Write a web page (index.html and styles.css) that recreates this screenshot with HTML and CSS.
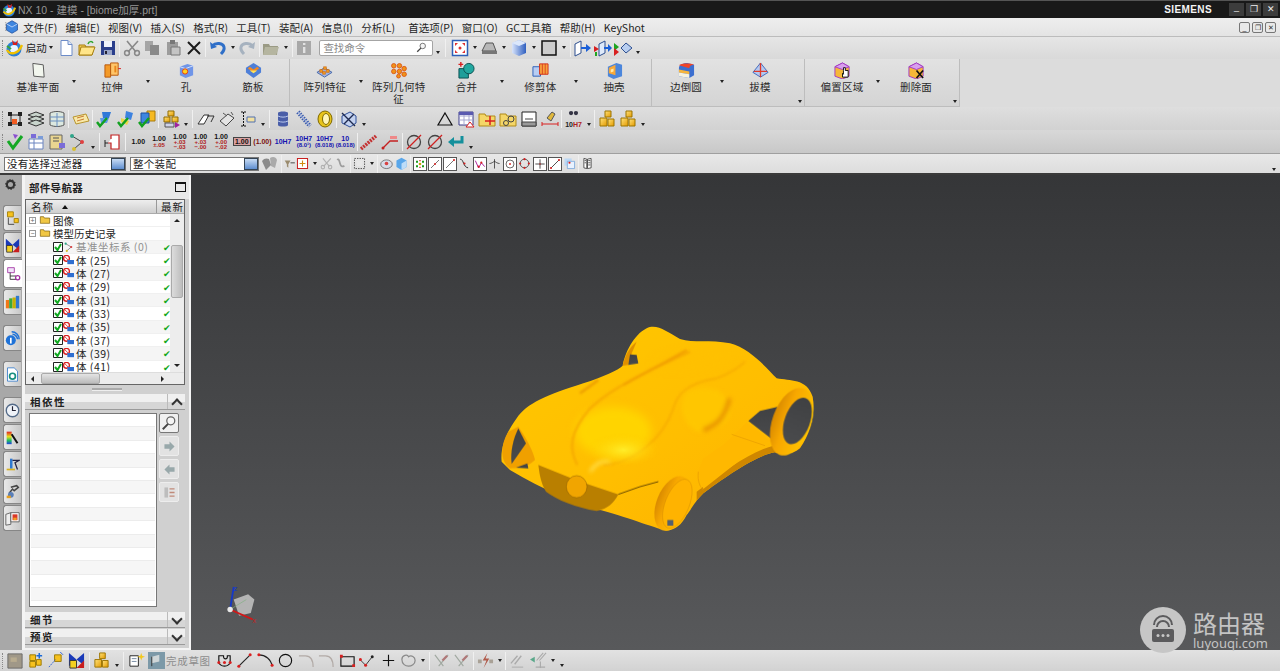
FILE: index.html
```html
<!DOCTYPE html>
<html lang="zh">
<head>
<meta charset="utf-8">
<title>NX 10 - 建模</title>
<link rel="stylesheet" href="styles.css">
</head>
<body>
<svg class="defs" aria-hidden="true">
<defs>
<linearGradient id="gy" x1="0" y1="0" x2="1" y2="1"><stop offset="0" stop-color="#ffe27a"/><stop offset="1" stop-color="#e39a00"/></linearGradient>
<linearGradient id="gb" x1="0" y1="0" x2="1" y2="0"><stop offset="0" stop-color="#d8e4fb"/><stop offset="1" stop-color="#2f5fc0"/></linearGradient>
<symbol id="globe" viewBox="0 0 18 18"><circle cx="9" cy="10" r="7.5" fill="#2b7fd8"/><circle cx="9" cy="10" r="4" fill="#e8f2ff"/><path d="M2 11C5 16 13 16 17 6" fill="none" stroke="#f0c000" stroke-width="2.4"/><path d="M7 1l3 3 3-3-1 5H8z" fill="#d81c1c"/><path d="M2 7l4 3" stroke="#3aa53a" stroke-width="2"/></symbol>
<symbol id="doc" viewBox="0 0 18 18"><path d="M4 1.500h7l4 4v11H4z" fill="#fff" stroke="#6d8cc8"/><path d="M11 1.500v4h4" fill="#d9e5f8" stroke="#6d8cc8"/></symbol>
<symbol id="open" viewBox="0 0 18 18"><path d="M1 6h6l1 2h8l-2 8H1z" fill="#f2cd58" stroke="#a77f10"/><path d="M3 8h14l-3 8H1z" fill="#ffe58a" stroke="#a77f10"/><path d="M10 5c1-3 4-3 5-1" fill="none" stroke="#2fa52f" stroke-width="1.500"/></symbol>
<symbol id="save" viewBox="0 0 18 18"><path d="M2 2h14v14H2z" fill="#2b3f8c"/><path d="M5 2h8v6H5z" fill="#eef2fb"/><path d="M5 11h8v5H5z" fill="#9aa6c8"/><path d="M6 12h2v3H6z" fill="#223"/></symbol>
<symbol id="cut" viewBox="0 0 18 18"><path d="M5 13L15 2M13 13L4 2" stroke="#888" stroke-width="1.600"/><circle cx="4" cy="14" r="2.400" fill="none" stroke="#888" stroke-width="1.500"/><circle cx="14" cy="14" r="2.400" fill="none" stroke="#888" stroke-width="1.500"/></symbol>
<symbol id="copy" viewBox="0 0 18 18"><path d="M2 2h8v10H2z" fill="#a5a5a5"/><path d="M7 6h9v10H7z" fill="#8a8a8a"/></symbol>
<symbol id="paste" viewBox="0 0 18 18"><path d="M3 3h11v13H3z" fill="#9c9c9c"/><path d="M6 1h5v4H6z" fill="#777"/><path d="M7 8h9v8H7z" fill="#c4c4c4" stroke="#777"/></symbol>
<symbol id="x" viewBox="0 0 18 18"><path d="M3 3l12 12M15 3L3 15" stroke="#1b1b1b" stroke-width="2"/></symbol>
<symbol id="undo" viewBox="0 0 18 18"><path d="M3 7c4-4 11-3 12 1 .6 2.500-1 5-3 7" fill="none" stroke="#2f6fc8" stroke-width="3"/><path d="M1 3l1 7 6-2z" fill="#2f6fc8"/></symbol>
<symbol id="redo" viewBox="0 0 18 18"><path d="M15 7C11 3 4 4 3 8c-.6 2.500 1 5 3 7" fill="none" stroke="#a6b2bf" stroke-width="3"/><path d="M17 3l-1 7-6-2z" fill="#a6b2bf"/></symbol>
<symbol id="folderg" viewBox="0 0 18 18"><path d="M1 5h6l1 2h8l-1 9H1z" fill="#9a9a84"/><path d="M3 8h14l-3 8H1z" fill="#b5b5a0"/></symbol>
<symbol id="info" viewBox="0 0 18 18"><path d="M2 2h14v14H2z" fill="#a8a8a8"/><path d="M8 4h2.400v2H8zM8 8h2.400v6H8z" fill="#e2e2e2"/></symbol>
<symbol id="mag" viewBox="0 0 18 18"><circle cx="11" cy="6.500" r="4.500" fill="#f5f5f5" stroke="#666" stroke-width="1.400"/><path d="M8 10l-6 6" stroke="#444" stroke-width="2.200"/></symbol>
<symbol id="view" viewBox="0 0 18 18"><path d="M1.500 1.500h15v15h-15z" fill="#fff" stroke="#2d5fb8" stroke-width="1.500"/><path d="M4 4h3L4 7zM14 4v3l-3-3zM4 14v-3l3 3zM14 14h-3l3-3z" fill="#e03030"/><circle cx="9" cy="9" r="1.500" fill="#e03030"/></symbol>
<symbol id="printer" viewBox="0 0 18 18"><path d="M1 12l4-8h7l3 8z" fill="#b8b8b8" stroke="#555"/><path d="M1 12h15v3H1z" fill="#777"/></symbol>
<symbol id="bcube" viewBox="0 0 18 18"><path d="M2 4l7-3 7 3v10l-7 3-7-3z" fill="url(#gb)"/><path d="M2 4l7-3 7 3-7 3z" fill="#dbe7fb"/></symbol>
<symbol id="arrow3" viewBox="0 0 18 18"><path d="M2 5l6-3v12l-6 3z" fill="#fff" stroke="#2d4f90"/><path d="M8 9h6" stroke="#1a5fd8" stroke-width="2"/><path d="M13 5l5 4-5 4z" fill="#1a5fd8"/></symbol>
<symbol id="arrow4" viewBox="0 0 18 18"><path d="M5 5l6-3v12l-6 3z" fill="#dfeafa" stroke="#2d4f90"/><path d="M0 7l5 3-5 3z" fill="#d82020"/><path d="M2 13v4" stroke="#1fa51f" stroke-width="2"/><path d="M10 9h5" stroke="#1a5fd8" stroke-width="2"/><path d="M14 5l4 4-4 4z" fill="#1a5fd8"/></symbol>
<symbol id="arrow5" viewBox="0 0 18 18"><path d="M0 4l5 4-5 4z" fill="#1fa51f"/><path d="M0 9l5 4-5 4z" fill="#d82020"/><path d="M7 9l5-5 6 5-6 5z" fill="#b8cef0" stroke="#2d4f90"/></symbol>
<symbol id="plane" viewBox="0 0 18 18"><path d="M3 1.500l11 1.500 1 13-11-1z" fill="#f2f6ee" stroke="#555"/></symbol>
<symbol id="extrude" viewBox="0 0 18 18"><path d="M1 3h6v13H1z" fill="#f39a28" stroke="#b8560a"/><path d="M7 1h8v13H7z" fill="#ffc66a" stroke="#b8560a"/><path d="M11 4h2v7h-2z" fill="#e8851a"/><path d="M15 7h3" stroke="#d82020"/></symbol>
<symbol id="hole" viewBox="0 0 18 18"><path d="M2 5l8-3 6 2v10l-8 3-6-3z" fill="#6f95e8"/><path d="M2 5l6 2 8-3" fill="none" stroke="#d9e4fb"/><circle cx="7.500" cy="10" r="2.800" fill="#ffd21f" stroke="#e63a10"/></symbol>
<symbol id="rib" viewBox="0 0 18 18"><path d="M9 1l8 5v5l-8 6-8-6V6z" fill="#4e7fd8"/><path d="M3 7l6 4 6-4-2-2-4 3-4-3z" fill="#f68a1f"/><path d="M5 9l4 3 4-3" fill="#ffe35a"/></symbol>
<symbol id="pat" viewBox="0 0 18 18"><path d="M1 11l8-5 8 5-8 5z" fill="#9fb6e6" stroke="#4566a8"/><g fill="#f39a20" stroke="#c25a00" stroke-width=".5"><path d="M4 8h3v3H4zM8 5h3v3H8zM11 8h3v3h-3zM7 10h3v3H7z"/></g></symbol>
<symbol id="patg" viewBox="0 0 18 18"><g fill="#f09318" stroke="#d8480c" stroke-width=".8"><circle cx="4" cy="4" r="2.400"/><circle cx="10" cy="4" r="2.400"/><circle cx="4" cy="10" r="2.400"/><circle cx="10" cy="10" r="2.400"/><circle cx="15" cy="7" r="2.400"/><circle cx="15" cy="13" r="2.400"/><circle cx="9" cy="15" r="2"/></g></symbol>
<symbol id="unite" viewBox="0 0 18 18"><path d="M1 7h10v10H1z" fill="#1e9e9a" stroke="#0a4f50"/><circle cx="11.500" cy="7" r="5.500" fill="#22a8a0" stroke="#0a4f50"/><path d="M3 0v5M.5 2.500h5" stroke="#d82020" stroke-width="1.500"/></symbol>
<symbol id="trim" viewBox="0 0 18 18"><path d="M1 5h8v10H1z" fill="#b8cdf3" stroke="#2d5fb8"/><path d="M8 2h9v11H8z" fill="#f7a03c" stroke="#d4301a"/><path d="M11 2v11M14 2v11" stroke="#d4301a" stroke-width=".8"/></symbol>
<symbol id="shell" viewBox="0 0 18 18"><path d="M2 5l9-4 6 2v12l-9 3-6-3z" fill="#4b86dc"/><path d="M3 6l7-3v11l-7-2z" fill="#f8a838"/><path d="M5 8l3-1v3l-3 1z" fill="#ffeaa8"/></symbol>
<symbol id="blend" viewBox="0 0 18 18"><path d="M1 6c0-3 5-5 9-5l7 2v11l-5 3-11-2z" fill="#3c6fd0"/><path d="M1 8l11 2v3L1 11z" fill="#f7b53c"/><path d="M1 3.500l11 3c0-2 2-3.500 5-3.500-3-2-14-2-16 .5z" fill="#f04428"/><path d="M1 11l11 2v4L1 15z" fill="#f6f2e0"/></symbol>
<symbol id="draft" viewBox="0 0 18 18"><path d="M9 1l8 10-8 5-8-5z" fill="#b4c8f0" stroke="#3d67bd"/><path d="M9 1v15M2 10h14" stroke="#e03a2a" stroke-width="1.400"/></symbol>
<symbol id="offset" viewBox="0 0 18 18"><path d="M1 5l8-4 7 4v10l-7 3-8-3z" fill="#f6b838" stroke="#a13ac6"/><path d="M1 5l8 3 7-3-7-4z" fill="#d8a0ee" stroke="#a13ac6"/><path d="M10 9V6h2v3h3v7h-6v-4l1 1z" fill="#fff" stroke="#111"/></symbol>
<symbol id="delf" viewBox="0 0 18 18"><path d="M1 5l8-4 7 4v10l-7 3-8-3z" fill="#f6b838" stroke="#a13ac6"/><path d="M1 5l8 3 7-3-7-4z" fill="#d8a0ee" stroke="#a13ac6"/><path d="M9 9l7 8M16 9l-7 8" stroke="#111" stroke-width="1.800"/></symbol>
<symbol id="sk" viewBox="0 0 18 18"><path d="M5 5h9v9H5z" fill="none" stroke="#222"/><path d="M2 2h4v4H2zM12 2h4v4h-4zM2 12h4v4H2zM12 12h4v4h-4z" fill="#222"/><path d="M6 9h5v5H6z" fill="#f05a20"/></symbol>
<symbol id="layer" viewBox="0 0 18 18"><g fill="#c8d4cc" stroke="#333"><path d="M1 5l8-3 8 3-8 3z"/><path d="M1 9l8-3 8 3-8 3z"/><path d="M1 13l8-3 8 3-8 3z"/></g></symbol>
<symbol id="table" viewBox="0 0 18 18"><path d="M2 3c4-2 10-2 14 0v12c-4 2-10 2-14 0z" fill="#dce8e0" stroke="#555"/><path d="M2 7h14M2 11h14M9 3v14" stroke="#6b8fc0"/></symbol>
<symbol id="tag" viewBox="0 0 18 18"><path d="M1 7l13-3 3 7-13 3z" fill="#f8e8a8" stroke="#b8952e"/><path d="M5 8l7-2M5 11l7-2" stroke="#c87a30"/></symbol>
<symbol id="blue1" viewBox="0 0 18 18"><path d="M6 2h9l-2 6H7z" fill="#2f78d8"/><path d="M4 8h9l-2 5H5z" fill="#5c9ae8"/><path d="M1 12l3 4 7-8" fill="none" stroke="#12a020" stroke-width="2.400"/></symbol>
<symbol id="blue2" viewBox="0 0 18 18"><path d="M9 1l7 2-2 7-6-2z" fill="#3c82e0"/><path d="M4 8l8 3-2 4-6-3z" fill="#e8d848"/><path d="M1 12l3 4 7-8" fill="none" stroke="#12a020" stroke-width="2.400"/></symbol>
<symbol id="blue3" viewBox="0 0 18 18"><path d="M9 1h8v10H9z" fill="#f6ba22" stroke="#a87a0a"/><path d="M3 3h8v10H3z" fill="#3e86e0" stroke="#1c4f9f"/><path d="M1 12l3 4 7-8" fill="none" stroke="#12a020" stroke-width="2.400"/></symbol>
<symbol id="menui" viewBox="0 0 18 18"><path d="M9 1l7 4v8l-7 4-7-4V5z" fill="#3e86e0" stroke="#1c4f9f"/><path d="M2 5l7 4 7-4" fill="none" stroke="#cfe0fa"/><path d="M1 3v12" stroke="#666" stroke-dasharray="1 1"/></symbol>
<symbol id="cubes" viewBox="0 0 18 18"><g fill="url(#gy)" stroke="#8f6a00"><path d="M6 1h6v5H6z"/><path d="M2 7h6v5H2z"/><path d="M10 7h6v5h-6z"/></g><path d="M3 13h9v4H3z" fill="#cfd2e8" stroke="#555"/><path d="M13 12l5 3-5 3z" fill="#a020a0"/></symbol>
<symbol id="skew" viewBox="0 0 18 18"><path d="M1 14l6-9h5l-5 9z" fill="#fff" stroke="#333"/><path d="M10 6l7 0-3 6" fill="none" stroke="#333"/></symbol>
<symbol id="eraser" viewBox="0 0 18 18"><path d="M2 11l8-7 6 4-8 8z" fill="#e4e4e4" stroke="#444"/><path d="M5 3l4 3M13 2l2 3" stroke="#555"/></symbol>
<symbol id="dimv" viewBox="0 0 18 18"><path d="M2 2h5M2 16h5M4.500 2v14" stroke="#111" stroke-dasharray="2 1"/><path d="M8 7h8v5H8z" fill="#f2e0a0" stroke="#5070b0"/></symbol>
<symbol id="cyl" viewBox="0 0 18 18"><path d="M4 3c0-2 10-2 10 0v12c0 2-10 2-10 0z" fill="#4a5ea8"/><path d="M4 6c3 1.500 7 1.500 10 0M4 11c3 1.500 7 1.500 10 0" fill="none" stroke="#b9c8ec"/></symbol>
<symbol id="spring" viewBox="0 0 18 18"><path d="M3 2l12 14" stroke="#3c5cae" stroke-width="4.500" stroke-dasharray="1.400 1.200"/><path d="M3 2l12 14" stroke="#9db2e2" stroke-width="1"/></symbol>
<symbol id="coil" viewBox="0 0 18 18"><ellipse cx="9" cy="9" rx="7" ry="8" fill="#e8c41c" stroke="#806a00"/><ellipse cx="10" cy="9" rx="3.500" ry="5.500" fill="#fff6b8" stroke="#806a00"/></symbol>
<symbol id="wire" viewBox="0 0 18 18"><path d="M2 6l8-4 6 4v7l-6 4-8-4z" fill="#c3d2f0" stroke="#2e4f98"/><path d="M2 3l13 13M4 14l10-10" stroke="#1e2a50" stroke-width="1.400"/></symbol>
<symbol id="tri" viewBox="0 0 18 18"><path d="M9 3l7 12H2z" fill="none" stroke="#111" stroke-width="1.200"/></symbol>
<symbol id="grid" viewBox="0 0 18 18"><path d="M2 2h14v13H2z" fill="#fff" stroke="#3a3a8a"/><path d="M2 6h14M2 10h14M7 2v13M12 2v13" stroke="#a8a8d0"/><path d="M2 2h14v3H2z" fill="#5a5ab0"/><path d="M13 12l4 5H9z" fill="#fff" stroke="#d82020"/></symbol>
<symbol id="starf" viewBox="0 0 18 18"><path d="M1 4h6l1 2h9v10H1z" fill="#f4d668" stroke="#b08a18"/><path d="M12 6v9M7 11h10" stroke="#d82020" stroke-width="1.500"/></symbol>
<symbol id="foldc" viewBox="0 0 18 18"><path d="M1 4h6l1 2h9v10H1z" fill="#f4d668" stroke="#b08a18"/><circle cx="12" cy="9" r="3" fill="none" stroke="#444"/><circle cx="7" cy="13" r="2.500" fill="none" stroke="#444"/></symbol>
<symbol id="sheet" viewBox="0 0 18 18"><path d="M2 2h14v14H2z" fill="#fff" stroke="#222"/><path d="M2 12h14v4H2zM5 9h8" fill="#999" stroke="#444"/></symbol>
<symbol id="brush" viewBox="0 0 18 18"><path d="M6 8l5-6 3 2-4 7z" fill="#e0b83c" stroke="#555"/><path d="M1 14h16M1 12v4M17 12v4" stroke="#d82020"/></symbol>
<symbol id="bino" viewBox="0 0 18 18"><circle cx="5" cy="5" r="3.500" fill="#334"/><circle cx="13" cy="5" r="3.500" fill="#334"/></symbol>
<symbol id="gold" viewBox="0 0 18 18"><g fill="url(#gy)" stroke="#9c7400"><path d="M7 1h6v6H7z"/><path d="M2 8h7v8H2z"/><path d="M10 9h6v7h-6z"/></g></symbol>
<symbol id="check" viewBox="0 0 18 18"><path d="M2 8l5 7L16 3" fill="none" stroke="#14a824" stroke-width="3"/><path d="M7 1l2 5 3-4" fill="#8a4fd0"/></symbol>
<symbol id="asm" viewBox="0 0 18 18"><path d="M2 6h14v10H2z" fill="#fff" stroke="#6a84c0"/><path d="M2 10h14M7 6v10" stroke="#6a84c0"/><path d="M4 1h5v4H4z" fill="#7a6cd8"/><path d="M11 3h5v3h-5z" fill="#7a9cd8"/></symbol>
<symbol id="asm2" viewBox="0 0 18 18"><path d="M2 2h12v14H2z" fill="#e9d590" stroke="#666"/><path d="M5 5h6M5 8h6" stroke="#555"/><path d="M11 10h6v5h-6z" fill="#7a6cd8"/></symbol>
<symbol id="net" viewBox="0 0 18 18"><path d="M3 3l10 6-8 7" fill="none" stroke="#444"/><circle cx="3" cy="3" r="2" fill="#2fa58a"/><circle cx="13" cy="9" r="2" fill="#e04040"/><circle cx="5" cy="16" r="2" fill="#d8c030"/></symbol>
<symbol id="step" viewBox="0 0 18 18"><path d="M7 6V2h8v14H7V10H4" fill="#fff" stroke="#c42020" stroke-width="1.200"/><path d="M1 7v7M1 10h3" stroke="#222"/></symbol>
<symbol id="ruler" viewBox="0 0 18 18"><path d="M1 16L16 3" stroke="#c43030" stroke-width="3.500" stroke-dasharray="2 1"/></symbol>
<symbol id="dimr" viewBox="0 0 18 18"><path d="M2 15l7-7h8" fill="none" stroke="#c42020" stroke-width="1.300"/><circle cx="2" cy="15" r="1.500" fill="#c42020"/><path d="M9 3h7v3H9z" fill="#e88"/></symbol>
<symbol id="noc" viewBox="0 0 18 18"><circle cx="9" cy="9" r="6.500" fill="none" stroke="#444" stroke-width="1.300"/><path d="M2 16L16 2" stroke="#d02020" stroke-width="1.300"/></symbol>
<symbol id="ret" viewBox="0 0 18 18"><path d="M15 3v6H5" fill="none" stroke="#14909c" stroke-width="3"/><path d="M7 4l-6 5 6 5z" fill="#14909c"/></symbol>
<symbol id="parts" viewBox="0 0 18 18"><path d="M1 6c2-3 5-3 7-2l2 6-5 5z" fill="#8a8a8a"/><path d="M9 3c3-2 6-1 7 2l-2 8-4-2z" fill="#aaa"/></symbol>
<symbol id="funnel" viewBox="0 0 18 18"><path d="M1 5h8L6 10v5L4 13v-3z" fill="#9a8b6e"/><path d="M9 8h6" stroke="#7a7a7a" stroke-width="2"/></symbol>
<symbol id="redsq" viewBox="0 0 18 18"><path d="M2 2h14v14H2z" fill="#fff" stroke="#c82020" stroke-width="1.400"/><path d="M9 5v8M5 9h8" stroke="#d08a10" stroke-width="1.500"/></symbol>
<symbol id="sel" viewBox="0 0 18 18"><path d="M2 2h14v14H2z" fill="none" stroke="#222" stroke-dasharray="2 1.500"/><path d="M5 5h8v8H5z" fill="#e8e8e8"/></symbol>
<symbol id="wave" viewBox="0 0 18 18"><path d="M3 4c2-2 3 1 4 5s3 5 6 3" fill="none" stroke="#666" stroke-width="2.400"/></symbol>
<symbol id="view2" viewBox="0 0 18 18"><ellipse cx="9" cy="10" rx="8" ry="6" fill="#d6dce8" stroke="#555"/><circle cx="9" cy="9" r="2.500" fill="#d84040"/></symbol>
<symbol id="cube3" viewBox="0 0 18 18"><path d="M2 5l7-4 7 4v9l-7 4-7-4z" fill="#58a6ea"/><path d="M9 9l7-4v9l-7 4z" fill="#bcdcf8"/></symbol>
<symbol id="boxpts" viewBox="0 0 18 18"><circle cx="9" cy="9" r="2" fill="#c7a400"/><path d="M3 4h3v3H3zM12 4h3v3h-3zM3 11h3v3H3zM12 11h3v3h-3z" fill="#1a9a1a"/><path d="M8 3h2v2H8zM8 13h2v2H8z" fill="#d82020"/></symbol>
<symbol id="ln" viewBox="0 0 18 18"><path d="M3 15L15 3" stroke="#333"/><circle cx="9" cy="9" r="1.500" fill="#d82020"/></symbol>
<symbol id="ln2" viewBox="0 0 18 18"><path d="M3 15L15 3" stroke="#333"/><circle cx="15" cy="3" r="1.500" fill="#d82020"/></symbol>
<symbol id="curve" viewBox="0 0 18 18"><path d="M3 3c5 0 4 11 11 12" fill="none" stroke="#222" stroke-width="1.300"/><circle cx="9" cy="9" r="1.500" fill="#d82020"/></symbol>
<symbol id="vee" viewBox="0 0 18 18"><path d="M2 4l5 11 4-8 5 6" fill="none" stroke="#b02aa0" stroke-width="1.500"/><circle cx="7" cy="13" r="1.600" fill="#d82020"/><circle cx="11" cy="7" r="1.600" fill="#d82020"/></symbol>
<symbol id="tee" viewBox="0 0 18 18"><path d="M9 3v13M2 9c3 0 5-2 7-3 2 1 4 3 7 3" fill="none" stroke="#222"/></symbol>
<symbol id="circd" viewBox="0 0 18 18"><circle cx="9" cy="9" r="6" fill="none" stroke="#222"/><circle cx="9" cy="9" r="1.400" fill="#d82020"/></symbol>
<symbol id="circp" viewBox="0 0 18 18"><circle cx="9" cy="9" r="6" fill="none" stroke="#222"/><g fill="#d82020"><circle cx="9" cy="3" r="1.500"/><circle cx="15" cy="9" r="1.500"/><circle cx="9" cy="15" r="1.500"/><circle cx="3" cy="9" r="1.500"/></g></symbol>
<symbol id="plus" viewBox="0 0 18 18"><path d="M9 2v14M2 9h14" stroke="#222" stroke-width="1.200"/><circle cx="9" cy="9" r="1" fill="#d82020"/></symbol>
<symbol id="tile" viewBox="0 0 18 18"><path d="M2 2h10v10H2z" fill="#bcd8f4"/><path d="M6 6h10v10H6z" fill="#e8f2ff" stroke="#6a9ed8"/><circle cx="9" cy="8" r="1.500" fill="#d82020"/></symbol>
<symbol id="book" viewBox="0 0 18 18"><path d="M4 2l4 1v13l-4-1zM9 3l5-1v13l-5 1z" fill="#fff" stroke="#222"/><path d="M5 5h2M5 8h2M10 5h3M10 8h3M10 11h3" stroke="#222"/></symbol>
<symbol id="sq" viewBox="0 0 18 18"><path d="M2 2h14v14H2z" fill="#cdcdcd" stroke="#111" stroke-width="1.500"/></symbol>
<symbol id="gear" viewBox="0 0 18 18"><circle cx="9" cy="9" r="5" fill="none" stroke="#333" stroke-width="3"/><circle cx="9" cy="9" r="6.500" fill="none" stroke="#333" stroke-width="1.600" stroke-dasharray="2 2"/></symbol>
<symbol id="t1" viewBox="0 0 18 18"><g fill="#f6c11e" stroke="#9c7a00"><path d="M3 1h7v6H3zM11 9h5v5h-5z"/></g><path d="M4 8v8h7" fill="none" stroke="#333"/></symbol>
<symbol id="t2" viewBox="0 0 18 18"><path d="M1 1l8 7 8-7v13l-8-6-8 7z" fill="#1a3ab8"/><path d="M2 9h7v8H2z" fill="#f4d020" stroke="#333"/><path d="M9 17l8-8v8z" fill="#c81e1e"/></symbol>
<symbol id="t3" viewBox="0 0 18 18"><path d="M2 2h8v6H2z" fill="#f2e4fa" stroke="#a030a0"/><path d="M5 8v8h7M5 12h7" fill="none" stroke="#222"/><circle cx="14" cy="14" r="2.500" fill="none" stroke="#a030a0" stroke-width="1.500"/></symbol>
<symbol id="t4" viewBox="0 0 18 18"><path d="M1 6h4v10H1z" fill="#f07818"/><path d="M5 4h4v12H5z" fill="#3aa83a"/><path d="M9 3h4v13H9z" fill="#c8b000"/><path d="M13 1h4v15h-4z" fill="#2f78d0"/></symbol>
<symbol id="t5" viewBox="0 0 18 18"><circle cx="7" cy="11" r="6" fill="#1e72d8"/><path d="M6 8h2v7H6z" fill="#fff"/><path d="M8 1c5 0 9 4 9 9M9 4c3 0 6 3 6 6" fill="none" stroke="#1e72d8" stroke-width="1.800"/></symbol>
<symbol id="t6" viewBox="0 0 18 18"><path d="M3 1h8l4 4v12H3z" fill="#fff" stroke="#3478c8"/><circle cx="9" cy="11" r="3.500" fill="none" stroke="#1a9080" stroke-width="2"/></symbol>
<symbol id="t7" viewBox="0 0 18 18"><circle cx="9" cy="9" r="7.500" fill="#eef2f8" stroke="#536a88" stroke-width="1.600"/><path d="M9 4v5h4" fill="none" stroke="#223" stroke-width="1.400"/></symbol>
<symbol id="t8" viewBox="0 0 18 18"><defs><linearGradient id="rb" x1="0" y1="0" x2="0" y2="1"><stop offset="0" stop-color="#e02020"/><stop offset=".4" stop-color="#e8e020"/><stop offset=".7" stop-color="#20c060"/><stop offset="1" stop-color="#2040e0"/></linearGradient></defs><path d="M2 2h6v15H2z" fill="url(#rb)"/><path d="M8 5l7 11" stroke="#111" stroke-width="2.400"/></symbol>
<symbol id="t9" viewBox="0 0 18 18"><path d="M6 2h3v12H6z" fill="#2f78d0"/><path d="M2 14h10v2H2z" fill="#d8b020"/><path d="M9 4h8l-5 3 3 8" fill="none" stroke="#224" stroke-width="1.500"/></symbol>
<symbol id="t10" viewBox="0 0 18 18"><path d="M7 4l7-2 2 2-5 4-2-2-4 5" fill="none" stroke="#444" stroke-width="1.800"/><circle cx="7" cy="13" r="3.500" fill="#5a7fb8"/><path d="M2 14h5v3H2z" fill="#e8a020"/></symbol>
<symbol id="t11" viewBox="0 0 18 18"><path d="M1 4l6-2v14l-6 1z" fill="#eee" stroke="#555"/><path d="M7 2h10v11H7z" fill="#fff" stroke="#555"/><path d="M9 4h6v7H9z" fill="#d83828"/><path d="M10 8h4v3h-4z" fill="#f0a020"/></symbol>
<symbol id="fldt" viewBox="0 0 18 18"><path d="M2 4h5l1 2h8v8H2z" fill="#f1c744" stroke="#7a5a00"/></symbol>
<symbol id="flag" viewBox="0 0 18 18"><path d="M0 0h18v18H0z" fill="#7c99a8"/><path d="M4 5l8-2v7l-8 2z" fill="#cfd6d8"/><path d="M4 5v10" stroke="#333"/></symbol>
<symbol id="skstar" viewBox="0 0 18 18"><path d="M2 4h9v11H2z" fill="#fff" stroke="#222"/><path d="M4 7h5M4 10h5" stroke="#7488a0"/><path d="M14 1l1 3 3 1-3 1-1 3-1-3-3-1 3-1z" fill="#f2c81e"/></symbol>
<symbol id="inv" viewBox="0 0 18 18"><path d="M1 1h16v16H1z" fill="#a09888" stroke="#666"/><path d="M4 5h7v5H4z" fill="#b8ac90"/></symbol>
<symbol id="addc" viewBox="0 0 18 18"><g fill="#f6c11e" stroke="#9c7a00"><path d="M3 3h6v6H3zM3 10h6v6H3zM10 8h5v6h-5z"/></g><path d="M13 1v6M10 4h6" stroke="#1a6ad8" stroke-width="1.600"/></symbol>
<symbol id="mvc" viewBox="0 0 18 18"><path d="M8 3h7v7H8z" fill="#f6c11e" stroke="#9c7a00"/><path d="M2 16l7-8" stroke="#2f62d0" stroke-dasharray="2 1"/><path d="M14 0l3 3" stroke="#2f62d0"/></symbol>
<symbol id="sproc" viewBox="0 0 18 18"><path d="M3 4h5v1c0 3 4 3 4 0V4h3v6c0 3-3 5-6 5s-6-2-6-5z" fill="none" stroke="#111" stroke-width="1.200"/><circle cx="3" cy="11" r="1.600" fill="#d82020"/><circle cx="9" cy="11" r="1.600" fill="#d82020"/><circle cx="15" cy="11" r="1.600" fill="#d82020"/></symbol>
<symbol id="line" viewBox="0 0 18 18"><path d="M3 15L15 3" stroke="#222" stroke-width="1.200"/><circle cx="3" cy="15" r="1.600" fill="#d82020"/><circle cx="15" cy="3" r="1.600" fill="#d82020"/></symbol>
<symbol id="arc" viewBox="0 0 18 18"><path d="M2 3c7 0 13 5 14 12" fill="none" stroke="#222" stroke-width="1.200"/><circle cx="2" cy="3" r="1.600" fill="#d82020"/><circle cx="16" cy="14" r="1.600" fill="#d82020"/></symbol>
<symbol id="circ" viewBox="0 0 18 18"><circle cx="9" cy="9" r="6.500" fill="none" stroke="#111" stroke-width="1.200"/></symbol>
<symbol id="fil" viewBox="0 0 18 18"><path d="M1 4h7c5 0 8 3 8 12" fill="none" stroke="#b2aaa6" stroke-width="1.300"/></symbol>
<symbol id="rect" viewBox="0 0 18 18"><path d="M2 5h14v10H2z" fill="none" stroke="#111" stroke-width="1.200"/><path d="M1 3h3v3H1zM14 13h3v3h-3z" fill="#d82020"/></symbol>
<symbol id="poly" viewBox="0 0 18 18"><path d="M1 8l6 6 7-9" fill="none" stroke="#333"/><circle cx="7" cy="14" r="1.600" fill="#d82020"/><circle cx="14" cy="5" r="1.600" fill="#222"/><circle cx="1.500" cy="8" r="1.600" fill="#d82020"/></symbol>
<symbol id="bigplus" viewBox="0 0 18 18"><path d="M9 3v12M3 9h12" stroke="#111" stroke-width="1.200"/></symbol>
<symbol id="blob" viewBox="0 0 18 18"><path d="M2 8c0-5 6-6 7-3 3-2 7 0 7 4s-4 6-7 6-7-2-7-7z" fill="none" stroke="#8a8a8a" stroke-width="1.300"/></symbol>
<symbol id="trimg" viewBox="0 0 18 18"><path d="M2 3l9 12M16 3L6 15" stroke="#a0a8a0" stroke-width="1.200"/><path d="M10 9l5-5" stroke="#b07878" stroke-width="2.500"/></symbol>
<symbol id="bolt" viewBox="0 0 18 18"><path d="M1 8h4v4H1zM13 8h4v4h-4z" fill="#a9a196"/><path d="M11 1L6 9h4l-3 8 6-10H9z" fill="#b05a4a"/></symbol>
<symbol id="para" viewBox="0 0 18 18"><path d="M2 12L9 4M6 13l7-9" stroke="#aaa" stroke-width="1.400"/><path d="M3 16h12" stroke="#aaa"/></symbol>
<symbol id="para2" viewBox="0 0 18 18"><path d="M0 8l5-3v6z" fill="#5aa88a"/><path d="M7 9l7-8M10 9l7-8M11 10v7M6 16h10" stroke="#aaa" stroke-width="1.200"/></symbol>
<symbol id="cmp" viewBox="0 0 18 18"><path d="M2 2h5v14H2z" fill="#bdbdbd"/><path d="M9 4h7M9 9h7M9 14h7" stroke="#c08a7a" stroke-width="2"/></symbol>
<symbol id="arr-r" viewBox="0 0 18 18"><path d="M2 6h7V2l7 7-7 7v-4H2z" fill="#98a8aa"/></symbol>
<symbol id="arr-l" viewBox="0 0 18 18"><path d="M16 6H9V2L2 9l7 7v-4h7z" fill="#98a8aa"/></symbol>
<symbol id="cb" viewBox="0 0 10 10"><path d="M.5.500h9v9h-9z" fill="#fff" stroke="#222"/><path d="M2 5l2.500 3L8 2" fill="none" stroke="#10a820" stroke-width="2"/></symbol>
<symbol id="bodyi" viewBox="0 0 14 12"><circle cx="4" cy="4" r="3.500" fill="#fff" stroke="#d81c1c" stroke-width="1.600"/><path d="M2 2l4 4" stroke="#d81c1c"/><path d="M5 6h8v5H5z" fill="#2f6fd0"/></symbol>
</defs>
</svg>

<div class="app">
  <header class="titlebar">
    <svg class="app-logo"><use href="#globe"/></svg>
    <span class="title-text">NX 10 - 建模 - [biome加厚.prt]</span>
    <span class="siemens">SIEMENS</span>
    <span class="winbtn win-min">_</span><span class="winbtn">❐</span><span class="winbtn">✕</span>
  </header>

  <nav class="menubar">
    <svg class="menu-logo"><use href="#menui"/></svg>
    <span>文件(F)</span><span>编辑(E)</span><span>视图(V)</span><span>插入(S)</span><span>格式(R)</span><span>工具(T)</span><span>装配(A)</span><span>信息(I)</span><span>分析(L)</span><span class="menu-gap">首选项(P)</span><span>窗口(O)</span><span>GC工具箱</span><span>帮助(H)</span><span>KeyShot</span>
    <span class="docbtns"><b>_</b><b>❐</b><b>✕</b></span>
  </nav>

  <div class="tb row1">
    <u class="grip"></u>
    <svg class="i"><use href="#globe"/></svg><span class="startlbl">启动</span><i class="dd"></i>
    <svg class="i"><use href="#doc"/></svg><svg class="i"><use href="#open"/></svg><svg class="i"><use href="#save"/></svg><u class="sep"></u>
    <svg class="i"><use href="#cut"/></svg><svg class="i"><use href="#copy"/></svg><svg class="i"><use href="#paste"/></svg><svg class="i"><use href="#x"/></svg><u class="sep"></u>
    <svg class="i"><use href="#undo"/></svg><i class="dd"></i><svg class="i"><use href="#redo"/></svg><u class="sep"></u>
    <svg class="i"><use href="#folderg"/></svg><i class="dd"></i><u class="sep"></u><svg class="i"><use href="#info"/></svg>
    <div class="searchbox"><span>查找命令</span><svg class="i-s"><use href="#mag"/></svg></div><i class="dd dd-low"></i><u class="sep ww"></u>
    <svg class="i"><use href="#view"/></svg><i class="dd"></i><svg class="i"><use href="#printer"/></svg><i class="dd"></i><svg class="i"><use href="#bcube"/></svg><i class="dd"></i><svg class="i"><use href="#sq"/></svg><i class="dd"></i><u class="sep"></u>
    <svg class="i"><use href="#arrow3"/></svg><svg class="i"><use href="#arrow4"/></svg><svg class="i"><use href="#arrow5"/></svg><i class="dd dd-low"></i>
  </div>

  <div class="ribbon">
    <section class="rgroup g1">
      <div class="ritem"><svg class="ri"><use href="#plane"/></svg><span>基准平面</span><i class="dd dd-r"></i></div>
      <div class="ritem"><svg class="ri"><use href="#extrude"/></svg><span>拉伸</span><i class="dd dd-r"></i></div>
      <div class="ritem"><svg class="ri"><use href="#hole"/></svg><span>孔</span></div>
      <div class="ritem narrow"><svg class="ri"><use href="#rib"/></svg><span>筋板</span></div>
    </section>
    <section class="rgroup g2">
      <div class="ritem"><svg class="ri"><use href="#pat"/></svg><span>阵列特征</span><i class="dd dd-r"></i></div>
      <div class="ritem"><svg class="ri"><use href="#patg"/></svg><span class="wrap">阵列几何特征</span></div>
      <div class="ritem mid"><svg class="ri"><use href="#unite"/></svg><span>合并</span><i class="dd dd-r"></i></div>
      <div class="ritem"><svg class="ri"><use href="#trim"/></svg><span>修剪体</span><i class="dd dd-r"></i></div>
      <div class="ritem"><svg class="ri"><use href="#shell"/></svg><span>抽壳</span></div>
    </section>
    <section class="rgroup g3">
      <div class="ritem"><svg class="ri"><use href="#blend"/></svg><span>边倒圆</span><i class="dd dd-r"></i></div>
      <div class="ritem"><svg class="ri"><use href="#draft"/></svg><span>拔模</span></div>
      <i class="dd dd-c"></i>
    </section>
    <section class="rgroup g4">
      <div class="ritem"><svg class="ri"><use href="#offset"/></svg><span>偏置区域</span><i class="dd dd-r"></i></div>
      <div class="ritem"><svg class="ri"><use href="#delf"/></svg><span>删除面</span></div>
      <i class="dd dd-c"></i>
    </section>
  </div>

  <div class="tb row3">
    <u class="grip"></u>
    <svg class="i"><use href="#sk"/></svg><svg class="i"><use href="#layer"/></svg><svg class="i"><use href="#table"/></svg><u class="sep"></u>
    <svg class="i"><use href="#tag"/></svg><u class="sep"></u>
    <svg class="i"><use href="#blue1"/></svg><svg class="i"><use href="#blue2"/></svg><svg class="i"><use href="#blue3"/></svg><u class="sep"></u>
    <svg class="i"><use href="#cubes"/></svg><i class="dd dd-low"></i><u class="sep w"></u>
    <svg class="i"><use href="#skew"/></svg><svg class="i"><use href="#eraser"/></svg><svg class="i"><use href="#dimv"/></svg><i class="dd dd-low"></i><u class="sep w"></u>
    <svg class="i"><use href="#cyl"/></svg><svg class="i"><use href="#spring"/></svg><svg class="i"><use href="#coil"/></svg><u class="sep"></u>
    <svg class="i"><use href="#wire"/></svg><i class="dd dd-low"></i>
    <u class="blank"></u>
    <svg class="i"><use href="#tri"/></svg><svg class="i"><use href="#grid"/></svg><svg class="i"><use href="#starf"/></svg><svg class="i"><use href="#foldc"/></svg><svg class="i"><use href="#sheet"/></svg><svg class="i"><use href="#brush"/></svg><u class="sep"></u>
    <div class="i bino-w"><svg class="i-s"><use href="#bino"/></svg><span>10<em>H7</em></span></div><i class="dd dd-low"></i><u class="sep"></u>
    <svg class="i"><use href="#gold"/></svg><svg class="i"><use href="#gold"/></svg><i class="dd dd-low"></i>
  </div>

  <div class="tb row4">
    <u class="grip"></u>
    <svg class="i"><use href="#check"/></svg><svg class="i"><use href="#asm"/></svg><svg class="i"><use href="#asm2"/></svg><svg class="i"><use href="#net"/></svg><i class="dd dd-low"></i><u class="sep w"></u>
    <svg class="i"><use href="#step"/></svg><u class="sep w"></u>
    <div class="d"><span>1.00</span></div>
    <div class="d"><span>1.00</span><small>±.05</small></div>
    <div class="d"><span>1.00</span><small>+.03<br>−.03</small></div>
    <div class="d"><span>1.00</span><small>+.03<br>−.00</small></div>
    <div class="d"><span>1.00</span><small>+.00<br>−.02</small></div>
    <div class="d"><span class="boxed">1.00</span></div>
    <div class="d"><span class="paren">(1.00)</span></div>
    <div class="d blue"><span>10H7</span></div>
    <div class="d blue"><span>10H7</span><small>(8.0¹)</small></div>
    <div class="d blue"><span>10H7</span><small>(8.018)</small></div>
    <div class="d blue"><span>10</span><small>(8.018)</small></div>
    <u class="sep"></u>
    <svg class="i"><use href="#ruler"/></svg><svg class="i"><use href="#dimr"/></svg><u class="sep"></u>
    <svg class="i"><use href="#noc"/></svg><svg class="i"><use href="#noc"/></svg><svg class="i"><use href="#ret"/></svg><i class="dd dd-low"></i>
  </div>

  <div class="tb selbar">
    <div class="combo c1"><span>没有选择过滤器</span><i></i></div>
    <div class="combo c2"><span>整个装配</span><i></i></div>
    <svg class="i"><use href="#parts"/></svg><u class="sep"></u>
    <svg class="i-m tight"><use href="#funnel"/></svg><svg class="i-m"><use href="#redsq"/></svg><i class="dd"></i><svg class="i-m dim"><use href="#cut"/></svg><svg class="i-m dim"><use href="#wave"/></svg><u class="sep"></u>
    <svg class="i-m"><use href="#sel"/></svg><i class="dd"></i><u class="sep"></u>
    <svg class="i-m"><use href="#view2"/></svg><svg class="i-m"><use href="#cube3"/></svg><u class="sep"></u>
    <svg class="i-m btn"><use href="#boxpts"/></svg><svg class="i-m btn"><use href="#ln"/></svg><svg class="i-m btn"><use href="#ln2"/></svg><svg class="i-m"><use href="#curve"/></svg><svg class="i-m btn"><use href="#vee"/></svg><svg class="i-m"><use href="#tee"/></svg><svg class="i-m btn"><use href="#circd"/></svg><svg class="i-m"><use href="#circp"/></svg><svg class="i-m btn"><use href="#plus"/></svg><svg class="i-m btn"><use href="#line"/></svg><svg class="i-m"><use href="#tile"/></svg><u class="sep"></u>
    <svg class="i-m"><use href="#book"/></svg>
    <i class="dd dd-end"></i>
  </div>

  <main class="work">
    <aside class="rail">
      <svg class="i-m rail-gear"><use href="#gear"/></svg>
      <div class="tab"><svg class="i-m"><use href="#t1"/></svg></div>
      <div class="tab"><svg class="i-m"><use href="#t2"/></svg></div>
      <div class="tab active"><svg class="i-m"><use href="#t3"/></svg></div>
      <div class="tab"><svg class="i-m"><use href="#t4"/></svg></div>
      <div class="tab gap"><svg class="i-m"><use href="#t5"/></svg></div>
      <div class="tab gap"><svg class="i-m"><use href="#t6"/></svg></div>
      <div class="tab gap"><svg class="i-m"><use href="#t7"/></svg></div>
      <div class="tab"><svg class="i-m"><use href="#t8"/></svg></div>
      <div class="tab"><svg class="i-m"><use href="#t9"/></svg></div>
      <div class="tab"><svg class="i-m"><use href="#t10"/></svg></div>
      <div class="tab"><svg class="i-m"><use href="#t11"/></svg></div>
    </aside>

    <section class="panel">
      <div class="panel-head"><span>部件导航器</span><u class="maxbtn"></u></div>
      <div class="tree">
        <div class="thead"><span class="th-name">名称<i class="sort"></i></span><span class="th-new">最新</span></div>
        <div class="tbody">
          <div class="tlist">
            <div class="tr"><u class="pm">+</u><svg class="fld"><use href="#fldt"/></svg><span>图像</span></div>
            <div class="tr"><u class="pm">−</u><svg class="fld"><use href="#fldt"/></svg><span>模型历史记录</span></div>
            <div class="tr leaf alt"><svg class="cb"><use href="#cb"/></svg><svg class="bi"><use href="#net"/></svg><span class="grey">基准坐标系 (0)</span><em>✔</em></div>
            <div class="tr leaf"><svg class="cb"><use href="#cb"/></svg><svg class="bi"><use href="#bodyi"/></svg><span>体 (25)</span><em>✔</em></div>
            <div class="tr leaf alt"><svg class="cb"><use href="#cb"/></svg><svg class="bi"><use href="#bodyi"/></svg><span>体 (27)</span><em>✔</em></div>
            <div class="tr leaf"><svg class="cb"><use href="#cb"/></svg><svg class="bi"><use href="#bodyi"/></svg><span>体 (29)</span><em>✔</em></div>
            <div class="tr leaf alt"><svg class="cb"><use href="#cb"/></svg><svg class="bi"><use href="#bodyi"/></svg><span>体 (31)</span><em>✔</em></div>
            <div class="tr leaf"><svg class="cb"><use href="#cb"/></svg><svg class="bi"><use href="#bodyi"/></svg><span>体 (33)</span><em>✔</em></div>
            <div class="tr leaf alt"><svg class="cb"><use href="#cb"/></svg><svg class="bi"><use href="#bodyi"/></svg><span>体 (35)</span><em>✔</em></div>
            <div class="tr leaf"><svg class="cb"><use href="#cb"/></svg><svg class="bi"><use href="#bodyi"/></svg><span>体 (37)</span><em>✔</em></div>
            <div class="tr leaf alt"><svg class="cb"><use href="#cb"/></svg><svg class="bi"><use href="#bodyi"/></svg><span>体 (39)</span><em>✔</em></div>
            <div class="tr leaf"><svg class="cb"><use href="#cb"/></svg><svg class="bi"><use href="#bodyi"/></svg><span>体 (41)</span><em>✔</em></div>
          </div>
          <div class="vscroll"><i class="up"></i><u class="thumb"></u><i class="down"></i></div>
        </div>
        <div class="hscroll"><i class="left"></i><u class="hthumb"></u><i class="right"></i></div>
      </div>
      <div class="splitter"><u></u></div>
      <div class="sect"><span>相依性</span><b class="chev up-c"></b></div>
      <div class="dep">
        <div class="deplist"><u></u><u></u><u></u><u></u><u></u><u></u><u></u><u></u><u></u><u></u><u></u><u></u><u></u><u></u><u></u></div>
        <div class="depbtns">
          <div class="sbtn on"><svg class="i"><use href="#mag"/></svg></div>
          <div class="sbtn"><svg class="i-m"><use href="#arr-r"/></svg></div>
          <div class="sbtn"><svg class="i-m"><use href="#arr-l"/></svg></div>
          <div class="sbtn"><svg class="i-m"><use href="#cmp"/></svg></div>
        </div>
      </div>
      <div class="sect s-low"><span>细节</span><b class="chev"></b></div>
      <div class="sect s-low2"><span>预览</span><b class="chev"></b></div>
    </section>

    <section class="viewport">
      <svg class="car" viewBox="0 0 1005 675">
        <defs>
          <path id="carbody" d="M35 440C30 400 50 350 80 310 110 265 170 240 280 205 340 185 385 165 398 152 405 115 430 60 470 40 500 25 530 50 570 72 610 85 660 72 720 85 780 100 830 160 860 190 900 198 950 190 968 245 975 290 965 350 930 400 910 418 880 420 855 412 800 420 700 490 640 535 610 565 600 590 590 600 575 630 555 645 530 647 500 640 450 620 350 590 260 565 170 530 60 465z"/>
          <clipPath id="carclip"><use href="#carbody"/></clipPath>
          <linearGradient id="body" x1="0" y1="0" x2="1" y2="1"><stop offset="0" stop-color="#ffc800"/><stop offset=".55" stop-color="#ffbe00"/><stop offset="1" stop-color="#fdb000"/></linearGradient>
          <radialGradient id="glow"><stop offset="0" stop-color="#ffec2a"/><stop offset="1" stop-color="#ffcc00" stop-opacity="0"/></radialGradient>
          <linearGradient id="ring" x1="0" y1="0" x2="1" y2="0"><stop offset="0" stop-color="#d98a00"/><stop offset=".35" stop-color="#f8a800"/><stop offset="1" stop-color="#ffc400"/></linearGradient>
          <linearGradient id="hollow" x1="0" y1="0" x2="0" y2="1"><stop offset="0" stop-color="#404143"/><stop offset="1" stop-color="#4a4b4d"/></linearGradient>
          <filter id="b3"><feGaussianBlur stdDeviation="3"/></filter>
          <filter id="b6"><feGaussianBlur stdDeviation="6"/></filter>
          <filter id="b12"><feGaussianBlur stdDeviation="12"/></filter>
        </defs>
        <use href="#carbody" fill="url(#body)"/>
        <g clip-path="url(#carclip)">
          <path d="M620 530C700 470 780 410 850 392L890 420 620 580z" fill="#cf8700"/>
          <path d="M770 322L840 378 800 396 640 522 625 470 640 430 700 390z" fill="#ffb800"/>
          <path d="M725 358L825 392" stroke="#e79d00" stroke-width="2" fill="none"/>
          <g filter="url(#b12)">
            <ellipse cx="370" cy="350" rx="115" ry="75" fill="#ffd400"/>
            <ellipse cx="620" cy="130" rx="130" ry="24" transform="rotate(-8 620 130)" fill="#ffc000"/>
          </g>
          <g filter="url(#b3)">
            <path d="M262 450C235 400 240 350 300 280 370 215 470 170 600 110" fill="none" stroke="#f5a800" stroke-width="6"/>
            <path d="M270 235L325 195" stroke="#ea9a00" stroke-width="7" fill="none"/>
            <path d="M340 450C430 445 520 370 550 280 560 240 590 205 680 190 720 175 745 160 765 140" fill="none" stroke="#f6ac00" stroke-width="5"/>
            <path d="M400 210C480 165 520 145 590 105" fill="none" stroke="#f09c00" stroke-width="6"/>
          </g>
          <g filter="url(#b6)">
            <path d="M590 230C660 200 730 230 720 300 700 340 650 350 620 350 580 330 560 270 590 230z" fill="#ffc600"/>
            <path d="M640 345C680 330 705 310 718 250" fill="none" stroke="#e68c00" stroke-width="12"/>
            <path d="M300 470C320 440 340 435 360 440" fill="none" stroke="#ffe860" stroke-width="7"/>
          </g>
          <ellipse cx="400" cy="405" rx="110" ry="50" fill="url(#glow)"/>
          <path d="M625 470C622 500 630 515 640 525" fill="none" stroke="#e69a00" stroke-width="2"/>
        </g>
        <path d="M845 372L775 318 810 288 862 276 882 378z" fill="url(#hollow)"/>
        <path d="M775 322L842 376" stroke="#ffc000" stroke-width="2"/>
        <path d="M145 450L240 488 300 510 385 538C370 565 355 580 320 588 260 578 200 555 168 530 150 500 148 470 145 450z" fill="#b97f00"/>
        <path d="M385 538L450 515 505 500" fill="none" stroke="#4a3200" stroke-width="2.500"/>
        <ellipse cx="260" cy="515" rx="31" ry="33" fill="#f1a500" stroke="#8a5f00" stroke-width="1.500"/>
        <path d="M60 460C30 440 30 390 55 350L85 335C110 370 130 410 135 435 110 460 80 460 60 460z" fill="#f0a000"/>
        <path d="M85 340L108 385 65 447C60 410 70 370 85 340z" fill="url(#hollow)"/>
        <path d="M78 458L112 445 115 460z" fill="#444547"/>
        <path d="M398 152C405 120 420 95 440 80L425 115 415 150z" fill="#e09000"/>
        <path d="M420 118L440 120 445 145 415 150z" fill="url(#hollow)"/>
        <ellipse cx="905" cy="320" rx="58" ry="106" transform="rotate(20 905 320)" fill="url(#ring)"/>
        <ellipse cx="922" cy="318" rx="38" ry="73" transform="rotate(20 922 318)" fill="url(#hollow)"/>
        <ellipse cx="548" cy="565" rx="48" ry="86" transform="rotate(22 548 565)" fill="url(#ring)"/>
        <ellipse cx="562" cy="566" rx="36" ry="78" transform="rotate(22 562 566)" fill="#ffb300" stroke="#c88000"/>
        <path d="M532 615h18v17h-18z" fill="#54606e"/>
      </svg>
      <svg class="triad" viewBox="0 0 40 48">
        <path d="M13 18L29 12 36 18 32 33 19 36z" fill="#b4b4b4"/>
        <path d="M9 29L13 4" stroke="#1438c8" stroke-width="2"/>
        <path d="M9 29L34 40" stroke="#d01818" stroke-width="2"/>
        <path d="M9 29L27 18" stroke="#80b080" stroke-width=".7"/>
        <circle cx="9" cy="29" r="3" fill="#e8e8e8"/>
        <text class="tz" x="13" y="8">z</text>
        <text class="tx" x="34" y="44">x</text>
      </svg>
      <div class="wm">
        <div class="wm-badge"><svg viewBox="0 0 46 46"><path d="M14 22h18a2 2 0 0 1 2 2v9a2 2 0 0 1-2 2H14a2 2 0 0 1-2-2v-9a2 2 0 0 1 2-2z" fill="#5b5b5d"/><path d="M17 20a6 6 0 0 1 12 0M14 18a9 9 0 0 1 18 0" fill="none" stroke="#5b5b5d" stroke-width="2"/><g fill="#c6c6c6"><circle cx="18" cy="28.500" r="1.500"/><circle cx="23" cy="28.500" r="1.500"/><circle cx="28" cy="28.500" r="1.500"/></g></svg></div>
        <div class="wm-text"><span class="wm-big">路由器</span><span class="wm-small">luyouqi.com</span></div>
      </div>
    </section>
  </main>

  <footer class="tb statusbar">
    <u class="grip"></u>
    <svg class="i-m inv"><use href="#inv"/></svg><svg class="i"><use href="#addc"/></svg><svg class="i"><use href="#mvc"/></svg><svg class="i"><use href="#t2"/></svg><u class="sep w"></u>
    <svg class="i"><use href="#gold"/></svg><i class="dd dd-low"></i><u class="sep w"></u>
    <svg class="i"><use href="#skstar"/></svg><svg class="i"><use href="#flag"/></svg><span class="finish">完成草图</span>
    <svg class="i"><use href="#sproc"/></svg><svg class="i"><use href="#line"/></svg><svg class="i"><use href="#arc"/></svg><svg class="i"><use href="#circ"/></svg><svg class="i"><use href="#fil"/></svg><svg class="i"><use href="#fil"/></svg><svg class="i"><use href="#rect"/></svg><svg class="i"><use href="#poly"/></svg><svg class="i"><use href="#bigplus"/></svg><svg class="i"><use href="#blob"/></svg><i class="dd"></i><u class="sep"></u>
    <svg class="i"><use href="#trimg"/></svg><svg class="i"><use href="#trimg"/></svg><u class="sep"></u>
    <svg class="i"><use href="#bolt"/></svg><i class="dd"></i><u class="sep"></u>
    <svg class="i"><use href="#para"/></svg><svg class="i"><use href="#para2"/></svg><i class="dd"></i><i class="dd dd-low"></i>
  </footer>
</div>
</body>
</html>
```

FILE: styles.css
```css
* { box-sizing: border-box; }
html, body { margin: 0; height: 671px; overflow: hidden; }
body { font-family: "Noto Sans CJK SC", "Liberation Sans", sans-serif; font-size: 10.5px; color: #222; background: #d4d4d4; }
u, i, em { text-decoration: none; font-style: normal; }
.defs { position: absolute; width: 0; height: 0; }
.app { display: flex; flex-direction: column; width: 1280px; height: 671px; }

.titlebar { height: 18px; flex: none; background: #191919; border-top: 1px solid #555; color: #959595; display: flex; align-items: center; font-family: "Liberation Sans", "Noto Sans CJK SC", sans-serif; font-size: 10.5px; padding-left: 2px; }
.app-logo { width: 14px; height: 14px; flex: none; }
.title-text { margin-left: 2px; }
.siemens { margin-left: auto; margin-right: 17px; color: #f4f4f4; font-weight: 700; font-size: 10px; letter-spacing: .4px; }
.winbtn { width: 15px; height: 13px; margin-right: 2px; background: #3c3c3c; color: #eee; font-size: 9px; line-height: 13px; text-align: center; }
.win-min { line-height: 9px; }

.menubar { height: 19px; flex: none; display: flex; align-items: center; gap: 8.3px; background: linear-gradient(#eeeeee, #e4e4e4); border-bottom: 1px solid #bcbcbc; padding-left: 5px; font-size: 10.5px; color: #1e1e1e; white-space: nowrap; }
.menu-logo { width: 14px; height: 14px; margin-right: -4px; flex: none; }
.menu-gap { margin-left: 5px; }
.docbtns { margin-left: auto; display: flex; gap: 2px; margin-right: 4px; }
.docbtns b { width: 11px; height: 11px; border: 1px solid #777; border-radius: 2px; background: #e8e8e8; font: 400 7px/9px "Liberation Sans", sans-serif; text-align: center; color: #333; }

.tb { display: flex; align-items: center; flex: none; }
.grip { width: 2px; height: 16px; margin: 0 0 0 2px; border-left: 1px dotted #888; flex: none; }
.sep { width: 1px; height: 18px; margin: 0 1px; background: #b0b0b0; border-right: 1px solid #f0f0f0; flex: none; }
.sep.w { margin: 0 2px; }
.sep.ww { margin: 0 3px; }
.i { width: 18px; height: 18px; margin: 0 1.5px; flex: none; display: block; }
.i-m { width: 13px; height: 13px; margin: 0 1px; flex: none; display: block; }
.i-s { width: 11px; height: 11px; display: block; flex: none; }
.dd { width: 0; height: 0; margin: 0 2.5px; border: 2.5px solid transparent; border-top: 3px solid #222; border-bottom: 0; flex: none; display: block; }
.dd-low { align-self: flex-end; margin-bottom: 4px; }
.dim { opacity: .55; filter: grayscale(1); }

.row1 { height: 22px; padding-bottom: 1px; background: linear-gradient(#e6e6e6, #d9d9d9); }
.row1 .i { margin: 0 1.4px; }
.startlbl { font-size: 10.5px; margin-left: 1px; }
.searchbox { width: 114px; height: 16px; margin-left: 5px; background: #fff; border: 1px solid #a4a4a4; border-radius: 2px; display: flex; align-items: center; justify-content: space-between; padding: 0 5px 0 3px; color: #888; }

.ribbon { height: 48px; flex: none; display: flex; background: #dcdcdc; }
.rgroup { display: flex; position: relative; background: linear-gradient(#e2e2e2, #d4d4d4); border-right: 1px solid #bdbdbd; border-bottom: 1px solid #bdbdbd; }
.g1 { width: 290px; padding-left: 1px; }
.g2 { width: 362px; }
.g3 { width: 153px; }
.g4 { width: 155px; }
.g2 .ritem:first-child { margin-left: -2px; }
.g3 .ritem:first-child { margin-left: -3px; }
.ritem { width: 74px; position: relative; display: flex; flex-direction: column; align-items: center; padding-top: 3px; line-height: 12px; letter-spacing: .2px; color: #2a2a2a; }
.narrow { width: 60px; }
.mid { width: 68px; padding-right: 6px; }
.ri { width: 17px; height: 17px; margin-bottom: 2px; display: block; }
.wrap { width: 58px; text-align: center; }
.dd-r { position: absolute; right: -1px; top: 21px; margin: 0; }
.dd-c { position: absolute; right: 2px; bottom: 3px; margin: 0; }

.row3 { height: 23px; background: linear-gradient(#dedede, #d2d2d2); }
.row4 { height: 24px; background: linear-gradient(#d8d8d8, #c8c8c8); border-bottom: 1px solid #9f9f9f; }
.blank { width: 66px; flex: none; }
.bino-w { display: flex; flex-direction: column; align-items: center; font: 700 7px/7px "Liberation Sans", sans-serif; }
.bino-w em { color: #b02020; }
.d { width: 19px; margin: 0 .85px; display: flex; flex-direction: column; align-items: center; font: 700 7px/7.500px "Liberation Sans", sans-serif; color: #111; flex: none; }
.d small { font-size: 6px; line-height: 5px; color: #b02020; text-align: center; }
.d.blue, .d.blue small { color: #1414b0; }
.boxed { background: #d8a0a0; border: 1px solid #444; padding: 0 1px; }
.paren { color: #7a1010; }

.selbar { height: 21px; background: linear-gradient(#e8e8e8, #dddddd); border-bottom: 2px solid #3a3a3a; padding-left: 4px; }
.combo { height: 14px; background: #fff; border: 1px solid #777; display: flex; justify-content: space-between; align-items: center; padding-left: 2px; line-height: 12px; letter-spacing: .3px; flex: none; }
.combo i { width: 14px; height: 12px; background: linear-gradient(#c8dcf4, #5e8ed0); border: 1px solid #345; display: block; }
.c1 { width: 122px; }
.c2 { width: 129px; margin-left: 4px; }
.i-m.btn { width: 14px; height: 14px; background: #fff; border: 1px solid #555; margin: 0 .5px; }
.i-m.tight { margin-right: -2px; }
.dd-end { margin-left: auto; align-self: flex-end; margin-bottom: 2px; margin-right: 4px; }

.work { flex: 1; display: flex; min-height: 0; background: #aaaaaa; }
.rail { width: 22px; flex: none; background: #a8a8a8; display: flex; flex-direction: column; align-items: flex-end; padding-right: 1px; }
.rail-gear { align-self: center; margin: 3px 0 14px; }
.tab { width: 18px; height: 26px; margin-bottom: 1px; background: linear-gradient(90deg, #e9e9e9, #c8c8c8); border: 1px solid #868686; border-right: 0; border-radius: 3px 0 0 3px; display: flex; align-items: center; justify-content: center; }
.tab .i-m { width: 15px; height: 15px; }
.tab.active { background: #fff; height: 29px; width: 19px; margin-right: -1px; }
.tab.gap { margin-top: 9px; }

.panel { width: 169px; flex: none; background: #d0d0d0; border: 1px solid #f4f4f4; border-width: 0 2px 2px 3px; display: flex; flex-direction: column; padding: 0 1px 0 0; }
.panel-head { height: 24px; display: flex; align-items: center; justify-content: space-between; padding: 0 3px 0 4px; font-weight: 700; font-size: 10.5px; letter-spacing: .3px; flex: none; background: #e8e8e8; margin-right: -1px; }
.maxbtn { width: 11px; height: 10px; border: 1px solid #111; border-top-width: 2px; }
.tree { height: 186px; flex: none; background: #fff; border: 1px solid #666; display: flex; flex-direction: column; width: 160px; }
.thead { height: 14px; display: flex; flex: none; background: linear-gradient(#eeeeee, #cfcfcf); border-bottom: 1px solid #aaa; letter-spacing: 1px; line-height: 13px; overflow: hidden; }
.th-name { width: 134px; padding-left: 5px; border-right: 1px solid #999; display: flex; align-items: center; gap: 8px; }
.sort { border: 3.5px solid transparent; border-top: 0; border-bottom: 4px solid #111; }
.th-new { padding-left: 4px; white-space: nowrap; }
.tbody { height: 158px; display: flex; flex: none; }
.tlist { width: 144px; flex: none; overflow: hidden; }
.tr { height: 13.33px; display: flex; align-items: center; position: relative; padding-left: 3px; line-height: 13px; border-bottom: 1px solid #f0f0f0; white-space: nowrap; }
.pm { width: 7px; height: 7px; border: 1px solid #999; color: #666; font: 7px/5px "Liberation Sans", sans-serif; text-align: center; flex: none; }
.fld { width: 12px; height: 12px; margin: 0 2px 0 3px; flex: none; }
.leaf { padding-left: 27px; font-family: "Noto Sans CJK SC", sans-serif; letter-spacing: .5px; }
.alt { background: #f5f5f5; }
.cb { width: 10px; height: 10px; flex: none; }
.bi { width: 12px; height: 10px; margin: 0 1px 0 0; flex: none; }
.grey { color: #909090; }
.leaf em { position: absolute; left: 137px; top: 0; color: #12a820; font-size: 8.5px; }
.vscroll { width: 14px; flex: none; background: #ededed; position: relative; }
.vscroll .up { position: absolute; top: 5px; left: 4px; border: 3px solid transparent; border-top: 0; border-bottom: 3px solid #222; }
.vscroll .down { position: absolute; bottom: 5px; left: 4px; border: 3px solid transparent; border-bottom: 0; border-top: 3px solid #222; }
.thumb { position: absolute; left: 1px; top: 31px; width: 12px; height: 53px; background: linear-gradient(90deg, #dcdcdc, #bdbdbd); border: 1px solid #aaa; border-radius: 2px; }
.hscroll { height: 12px; flex: none; background: #ececec; position: relative; border-top: 1px solid #ddd; }
.hscroll .left { position: absolute; left: 5px; top: 3px; border: 3px solid transparent; border-left: 0; border-right: 3px solid #222; }
.hscroll .right { position: absolute; left: 135px; top: 3px; border: 3px solid transparent; border-right: 0; border-left: 3px solid #222; }
.hthumb { position: absolute; left: 15px; top: 0; width: 59px; height: 11px; background: linear-gradient(#e4e4e4, #bbb); border: 1px solid #aaa; border-radius: 2px; }
.splitter { height: 9px; flex: none; display: flex; justify-content: center; align-items: center; }
.splitter u { width: 30px; height: 3px; background: #aaa; border-bottom: 1px solid #eee; }
.sect { height: 16px; width: 160px; flex: none; display: flex; justify-content: space-between; background: linear-gradient(#f0f0f0 50%, #d6d6d6 50%); border-bottom: 1px solid #9a9a9a; font-weight: 700; letter-spacing: 1.500px; padding-left: 5px; line-height: 15px; }
.chev { width: 18px; border-left: 1px solid #bbb; position: relative; }
.chev::before { content: ""; position: absolute; left: 5px; top: 3px; width: 6px; height: 6px; border: solid #333; border-width: 0 2px 2px 0; transform: rotate(45deg); }
.up-c::before { top: 6px; transform: rotate(-135deg); }
.dep { height: 201px; flex: none; display: flex; padding: 3px 0 0 4px; width: 160px; gap: 2px; }
.deplist { width: 128px; height: 194px; background: #fff; border: 1px solid #777; flex: none; display: flex; flex-direction: column; overflow: hidden; padding: 0 1px; }
.deplist u { height: 13.40px; flex: none; border-bottom: 1px solid #ececec; }
.deplist u:nth-child(even) { background: #f6f6f6; }
.depbtns { display: flex; flex-direction: column; gap: 3px; }
.sbtn { width: 20px; height: 20px; background: #e2e2e2; border: 1px solid #ededed; border-radius: 2px; display: flex; align-items: center; justify-content: center; }
.sbtn.on { background: #f0f0f0; border-color: #777; }
.sbtn .i { width: 16px; height: 16px; margin: 0; }
.s-low { margin-top: 1px; }
.s-low2 { margin-top: 1px; }

.viewport { flex: 1; position: relative; background: linear-gradient(#353638, #58595b); overflow: visible; }
.car { position: absolute; left: 299px; top: 140px; width: 335px; height: 225px; }
.triad { position: absolute; left: 31px; top: 408px; width: 36px; height: 44px; }
.tz { fill: #1438c8; font: 8px "Liberation Sans", sans-serif; }
.tx { fill: #c82020; font: 8px "Liberation Sans", sans-serif; }
.wm { position: absolute; left: 949px; top: 432px; display: flex; gap: 7px; z-index: 3; }
.wm-badge { width: 46px; height: 46px; border-radius: 50%; background: #c6c6c6; flex: none; }
.wm-badge svg { width: 46px; height: 46px; display: block; }
.wm-text { display: flex; flex-direction: column; color: #c4c4c4; margin-top: 2px; }
.wm-big { font-size: 24px; line-height: 28px; letter-spacing: 0; }
.wm-small { font: 13px/13px "Noto Sans", sans-serif; }

.statusbar { height: 21px; background: linear-gradient(#e2e2e2, #d2d2d2); }
.statusbar .i { width: 17px; height: 17px; margin: 0 1.750px; }
.statusbar .i-m.inv { width: 16px; height: 16px; margin: 0 2px 0 3px; }
.finish { color: #8d8d8d; letter-spacing: .7px; margin: 0 3px 0 -1px; white-space: nowrap; }
```
